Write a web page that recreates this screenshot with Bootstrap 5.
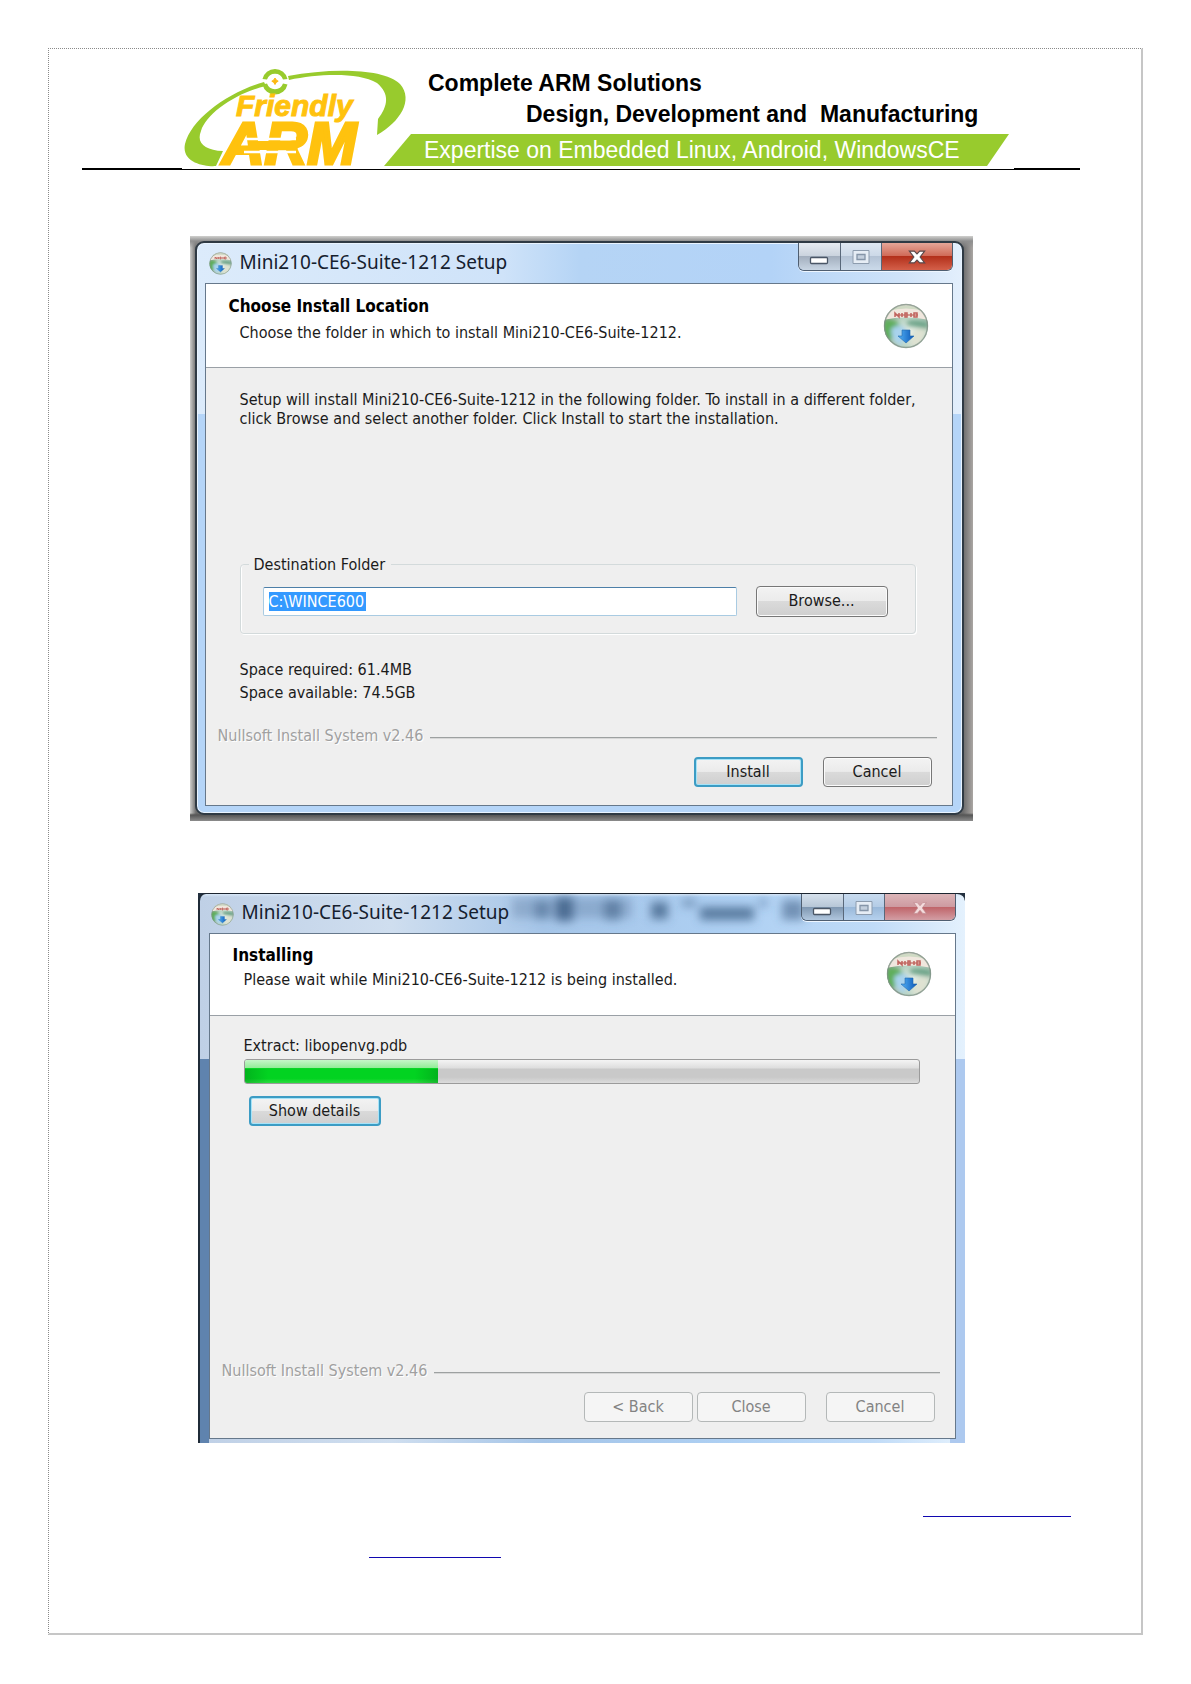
<!DOCTYPE html>
<html lang="en">
<head>
<meta charset="utf-8">
<meta name="viewport" content="width=device-width, initial-scale=1">
<title>Mini210-CE6-Suite installation</title>
<link href="https://cdn.jsdelivr.net/npm/bootstrap@5.3.0/dist/css/bootstrap.min.css" rel="stylesheet">
<style>
  body { background: #fff; color: #000; font-family: "Liberation Sans", Arial, sans-serif; }
  .sheet { margin: 48px; border: 1px dotted #8a8a8a; border-right: 2px solid #c6c6c6; border-bottom: 2px solid #c6c6c6; padding: 13px 61px 75px 33px; }

  /* Letterhead */
  .letterhead { border-bottom: 2px solid #000; padding-left: 100px; }
  .banner { background: #fff; width: 832px; max-width: 100%; padding: 5px 5px 2px 2px; margin-bottom: -1px; }
  .brand-logo { width: 224px; height: 100px; flex: none; overflow: visible; }
  .taglines { flex: 1 1 auto; margin-left: -24px; font-size: 23px; line-height: 31px; white-space: pre; }
  .tag-one { padding-left: 44px; padding-top: 1px; font-weight: bold; }
  .tag-two { padding-left: 142px; font-weight: bold; }
  .tag-band { margin-top: 4px; padding-left: 40px; line-height: 32px; color: #fff; background: #98cb2d; clip-path: polygon(27px 0, 100% 0, calc(100% - 22px) 100%, 0 100%); }

  /* Dialog windows */
  .shot-one { margin: 66px auto 0; width: 783px; max-width: 100%; padding: 5px 9px 6px 5px;
    background: linear-gradient(180deg, #d0d0ce 0, #8f8f8f 5px, transparent 12px), linear-gradient(0deg, #8c8c8c 0, #555 6px, transparent 8px), linear-gradient(90deg, #cfcfcd, #6b6b6b 6px, #888 50%, #6b6b6b 773px, #aaa6a3); }
  .shot-two { margin: 72px auto 0; width: 767px; max-width: 100%; background: #23303f; }
  .win { font-family: "DejaVu Sans Condensed", "DejaVu Sans", sans-serif; font-size: 16px; line-height: 19px; color: #1b1b1b; }
  .win-one { border: 2px solid #2f3a44; border-radius: 9px; padding: 0 9px 7px 8px;
    background: linear-gradient(180deg, transparent 171px, #b5d5f8 171px), linear-gradient(90deg, #dcebfb 0, #cfe3f9 40%, #b5d4f5 50%, #b3d3f7 75%, #cfe3f9 92%, #e3effc);
    box-shadow: inset 0 0 0 1px #e9f4ff; }
  .win-two { border-left: 2px solid #1f2b38; border-top: 1px solid #1c2530; border-radius: 8px 8px 0 0; padding: 0 9px 4px 9px;
    background: linear-gradient(180deg, #d8e7f7 0, rgba(216,231,247,0) 3px), linear-gradient(90deg, #5f83ae 9px, transparent 9px) 0 165px no-repeat, linear-gradient(90deg, transparent 750px, #adc9ef 750px) 0 165px no-repeat, linear-gradient(90deg, #bfd0e6 0, #cfdeef 25%, #a5c5e8 45%, #aed0f3 70%, #c0dbf7 88%, #e4f1fd); }
  .win-title { height: 40px; padding-left: 4px; gap: 8px; position: relative; }
  .win-two .win-title { height: 39px; padding-left: 2px; }
  .win-title h2 { font: 400 19px/38px "Noto Sans", "Open Sans", sans-serif; margin: 0; color: #15202e; }
  .win-two .win-title h2 { line-height: 37px; }
  .smudge { position: absolute; left: 293px; top: 0; width: 320px; height: 36px; }
  .disc-sm { width: 23px; height: 23px; margin-top: 9px; }
  .disc-lg { width: 46px; height: 46px; }
  .caption-btns { height: 28px; margin-left: auto; border: 1px solid #4f5e70; border-top: 0; border-radius: 0 0 6px 6px; overflow: hidden; box-shadow: 0 1px 0 #eef6ff; }
  .caption-btns button { border: 0; padding: 0; height: 27px; width: 41px; border-left: 1px solid #59687a; background: linear-gradient(#e6ebf1 0, #c9d2dd 50%, #a3afbe 50%, #c8d5e3); display: flex; align-items: center; justify-content: center; }
  .caption-btns button:first-child { border-left: 0; }
  .caption-btns .btn-shut { width: 71px; background: linear-gradient(#e6a698 0, #d06a57 48%, #b3301b 50%, #d4604a); }
  .caption-btns .btn-max { background: linear-gradient(#dfe8f2 0, #cbd8e7 50%, #b4c3d5 50%, #cbdaea); }
  .win-two .btn-min { background: linear-gradient(#d6e1ec 0, #b5c5d6 50%, #8098b2 50%, #b5cbe2); }
  .win-two .btn-max { background: linear-gradient(#c8dbef 0, #b3cbe5 50%, #9ab9da 50%, #b8d3ef); }
  .win-two .btn-shut { background: linear-gradient(#dcb5b8 0, #cd9aa0 48%, #c0666b 50%, #d4a3a9); }
  .win-two .caption-btns { height: 27px; }
  .client { border: 1px solid #66788b; background: #efefef; }
  .win-head { height: 84px; background: #fff; border-bottom: 1px solid #9aa0a6; padding: 12px 23px 0; }
  .win-two .win-head { height: 82px; padding-top: 11px; }
  .win-head h3 { font-size: 17px; line-height: 20px; font-weight: bold; margin: 0 0 7px; color: #000; }
  .win-two .win-head h3 { margin-bottom: 5px; }
  .win-head p { margin: 0; padding-left: 11px; }
  .win-head .disc-lg { margin: 7px 0 0; }
  .win-two .disc-lg { margin-top: 6px; }
  .body-one { padding: 22px 36px 0 34px; }
  .body-two { padding: 20px 36px 0 34px; }
  .dest { margin: 127px 0 0; border: 1px solid #d3dadb; border-radius: 4px; box-shadow: inset 1px 0 #fff, 1px 1px #fff; padding: 12px 27px 16px 22px; }
  .dest legend { float: none; width: auto; margin: 0 0 0 -14px; padding: 0 6px 0 5px; font-size: 16px; line-height: 19px; }
  .dest-input { flex: 1 1 auto; min-width: 0; height: 29px; border: 1px solid #a9cbe2; border-top-color: #4d7fa8; border-radius: 2px; padding: 0 5px; color: #fff; font: inherit;
    background: linear-gradient(#3399ff, #3399ff) 5px 4px / 97px 19px no-repeat #fff; }
  .dest-row { gap: 19px; }
  .wbtn { font: inherit; color: #1b1b1b; width: 109px; height: 30px; padding: 0 0 2px; border: 1px solid #777; border-radius: 4px; box-shadow: inset 0 0 0 1px #fbfbfb; background: linear-gradient(#f3f3f3 0, #ebebeb 48%, #dadada 50%, #cfcfcf); }
  .wbtn-wide { width: 132px; height: 31px; }
  .wbtn-focus { border: 2px solid #3c9cc4; box-shadow: inset 0 0 0 1px #a5e3f8; }
  .wbtn:disabled { color: #838383; background: #f5f5f5; border: 1px solid #b4b8b8; box-shadow: none; }
  .space-info { margin: 24px 0 22px; line-height: 23px; }
  .brandline { padding: 0 15px 0 12px; gap: 7px; color: #a0a0a0; text-shadow: 1px 1px #fff; }
  .brandline hr { flex: 1 1 auto; margin: 4px 0 0; border-top: 1px solid #9da1a1; box-shadow: 0 1px #d8d8d8; opacity: 1; }
  .win-actions { padding: 12px 20px 18px; gap: 20px; }
  .win-two .win-actions { padding-bottom: 16px; }
  .meter { height: 25px; margin: 4px -1px 12px 0; border: 1px solid #9b9b9b; border-radius: 3px; background: linear-gradient(#f4f4f4 0, #dedede 34%, #c9c9c9 40%, #c9c9c9 75%, #dcdcdc); }
  .meter .progress-bar { background: linear-gradient(90deg, rgba(0,120,20,.35), transparent 12%, transparent 88%, rgba(0,120,20,.35)) 0 9px no-repeat, linear-gradient(#c5f7c8 0, #8fec95 36%, #02d321 37%, #02d321 80%, #2bdc40); }
  .details { margin: 0 0 235px 5px; height: 30px; }

  /* Links under the figures */
  .ref-links { padding: 62px 9px 0 287px; }
  .ref-links a { height: 12px; border-bottom: 1px solid #1008b0; }
  .ref-a { width: 148px; }
  .ref-b { width: 132px; margin-top: 29px; }
</style>
</head>
<body>
<svg width="0" height="0" class="position-absolute" aria-hidden="true">
  <defs>
    <radialGradient id="g-disc" cx=".6" cy=".65" r=".6"><stop offset="0" stop-color="#e9efe6"/><stop offset=".6" stop-color="#b8d3c4"/><stop offset="1" stop-color="#8ba595"/></radialGradient>
    <linearGradient id="g-arrow" x1="0" x2="1"><stop offset="0" stop-color="#53b2f5"/><stop offset="1" stop-color="#0a56b8"/></linearGradient>
    <filter id="soft" x="-30%" y="-30%" width="160%" height="160%"><feGaussianBlur stdDeviation="2.2"/></filter>
    <filter id="haze" x="-60%" y="-60%" width="220%" height="220%"><feGaussianBlur stdDeviation="5"/></filter>
    <clipPath id="c-disc"><circle cx="23" cy="23" r="22"/></clipPath>
    <symbol id="disc" viewBox="0 0 46 46">
      <circle cx="23" cy="23" r="22" fill="url(#g-disc)"/>
      <g clip-path="url(#c-disc)">
        <g filter="url(#soft)">
          <path d="M0 18 Q12 14 18 24 Q12 32 6 38 L0 34Z" fill="#5fae5a"/>
          <path d="M8 26 Q18 18 24 28 L18 42 Q8 38 8 26Z" fill="#a9d3ee"/>
          <path d="M24 18 Q36 15 46 20 L45 26 Q34 24 24 22Z" fill="#6fa58a"/>
          <path d="M32 27 L44 26 L38 42 L26 44Z" fill="#dfe2d2"/>
        </g>
        <path d="M0 17 Q3 0 23 0 Q43 0 46 17 Q23 12 0 17Z" fill="#f0e7de"/>
        <path d="M5 8 Q23 -3 41 8 Q23 3 5 8Z" fill="#cfdac4"/>
        <path d="M12 14v-4l4 4v-4M19 10v4M22 14v-4h2v4zM28 10v4M31 14v-4h3v4z" stroke="#b4443e" stroke-opacity=".8" stroke-width="1.500" fill="none"/>
        <path d="M12 12H35" stroke="#c0625b" stroke-opacity=".6" stroke-width="2"/>
      </g>
      <path d="M19 27h8v6h4l-8 7-8-7h4z" fill="url(#g-arrow)" stroke="#2368ad" stroke-width=".6"/>
      <circle cx="23" cy="23" r="21.500" fill="none" stroke="#7d8f84" stroke-opacity=".75" stroke-width="1.400"/>
    </symbol>
    <symbol id="i-min" viewBox="0 0 20 20"><rect x="1.500" y="10.500" width="17" height="6" rx="1" fill="#fff" stroke="#4a5666" stroke-width="1.300"/></symbol>
    <symbol id="i-max" viewBox="0 0 20 20"><path d="M2 3.500h16v13H2z" fill="#e6edf5" stroke="#8d9cae"/><path d="M6 7.500h8v5H6z" fill="#c3cfdd" stroke="#8595a8" stroke-width="1.300"/></symbol>
    <symbol id="i-x" viewBox="0 0 20 20"><path d="M1.500 3.500h5.500L10 6.500l3-3h5.500L13.500 10l5 6.500h-5.500L10 13.500l-3 3H1.500L6.500 10z" fill="#fff" stroke="#5b4a4c" stroke-width="1.300"/></symbol>
    <symbol id="i-x-dim" viewBox="0 0 20 20"><path d="M3 4h4l3 3.500L13 4h4l-4.500 6 4.500 6h-4l-3-3.500L7 16H3l4.500-6z" fill="#f3dcdd" stroke="#c08a90" stroke-width=".8"/></symbol>
  </defs>
</svg>

<div class="sheet">
  <header class="letterhead">
    <div class="banner d-flex align-items-start position-relative">
      <svg class="brand-logo" viewBox="184 67 224 100" role="img" aria-label="Friendly ARM">
        <g fill="#98cb2d">
          <path d="M288 76 C330 68 384 68 400 84 C414 100 400 122 377 135 L378 119 C388 106 390 94 377 83 C358 72 318 74 289 80Z"/>
          <path d="M264 82 C228 92 191 119 185 144 C181 163 206 167 216 166 L223 151 C205 150 196 143 201 131 C206 114 235 93 266 86Z"/>
          <path d="M262.500 79 A12.800 12.800 0 0 1 287.500 79 L283 79.500 A8.500 8.500 0 0 0 267 79.500Z"/>
          <path d="M262.500 84.500 A12.800 12.800 0 0 0 287.500 84.500 L283 83.500 A8.500 8.500 0 0 1 267 83.500Z"/>
        </g>
        <path d="M275 78l1.200 2 2 1.200-2 1.200L275 84.500l-1.200-2.100-2-1.200 2-1.200z" fill="#fdb913" stroke="#fdb913"/>
        <text font-family="Liberation Sans, Arial, sans-serif" font-weight="bold" font-style="italic" fill="#ffc20e" stroke="#ffc20e"><tspan x="236" y="116" font-size="30" stroke-width="1">Friendly</tspan><tspan x="222" y="164" font-size="59" stroke-width="3">ARM</tspan></text>
        <path d="M246 139H296M244 152H296" stroke="#fff" stroke-width="2.500"/>
        <path d="M250 141H300L297 150H246Z" fill="#ffc20e"/>
      </svg>
      <div class="taglines"><div class="tag-one">Complete ARM Solutions</div><div class="tag-two">Design, Development and&nbsp; Manufacturing</div><div class="tag-band">Expertise on Embedded Linux, Android, WindowsCE</div></div>
    </div>
  </header>

  <main>
    <div class="shot-one">
      <section class="win win-one" aria-label="Choose install location">
        <div class="win-title d-flex align-items-start">
          <svg class="disc-sm" aria-hidden="true"><use href="#disc"/></svg>
          <h2>Mini210-CE6-Suite-1212 Setup</h2>
          <div class="caption-btns d-flex">
            <button type="button" class="btn-min" aria-label="Minimize"><svg width="20" height="20"><use href="#i-min"/></svg></button>
            <button type="button" class="btn-max" aria-label="Maximize"><svg width="20" height="20"><use href="#i-max"/></svg></button>
            <button type="button" class="btn-shut" aria-label="Close window"><svg width="18" height="18"><use href="#i-x"/></svg></button>
          </div>
        </div>
        <div class="client">
          <div class="win-head d-flex justify-content-between">
            <div>
              <h3>Choose Install Location</h3>
              <p>Choose the folder in which to install Mini210-CE6-Suite-1212.</p>
            </div>
            <svg class="disc-lg" aria-hidden="true"><use href="#disc"/></svg>
          </div>
          <div class="body-one">
            <p class="m-0 text-nowrap">Setup will install Mini210-CE6-Suite-1212 in the following folder. To install in a different folder,<br>click Browse and select another folder. Click Install to start the installation.</p>
            <fieldset class="dest">
              <legend>Destination Folder</legend>
              <div class="dest-row d-flex align-items-center">
                <input class="dest-input" type="text" value="C:\WINCE600" aria-label="Destination Folder">
                <button type="button" class="wbtn wbtn-wide">Browse...</button>
              </div>
            </fieldset>
            <div class="space-info">
              <div>Space required: 61.4MB</div>
              <div>Space available: 74.5GB</div>
            </div>
          </div>
          <div class="brandline d-flex align-items-center"><span>Nullsoft Install System v2.46</span><hr></div>
          <div class="win-actions d-flex justify-content-end">
            <button type="button" class="wbtn wbtn-focus">Install</button>
            <button type="button" class="wbtn">Cancel</button>
          </div>
        </div>
      </section>
    </div>

    <div class="shot-two">
      <section class="win win-two" aria-label="Installing">
        <div class="win-title d-flex align-items-start">
          <svg class="smudge" viewBox="0 0 320 36" aria-hidden="true">
            <g filter="url(#haze)" fill="#46658c">
              <rect x="10" y="4" width="120" height="20" opacity=".3"/>
              <rect x="33" y="7" width="14" height="18" opacity=".5"/>
              <rect x="54" y="3" width="17" height="24" opacity=".9"/>
              <rect x="102" y="6" width="17" height="20" opacity=".6"/>
              <rect x="149" y="8" width="17" height="17" opacity=".8"/>
              <rect x="180" y="5" width="14" height="8" opacity=".5"/>
              <rect x="198" y="13" width="54" height="13" opacity=".8"/>
              <rect x="256" y="5" width="10" height="8" opacity=".4"/>
              <rect x="280" y="6" width="22" height="20" opacity=".6"/>
            </g>
          </svg>
          <svg class="disc-sm" aria-hidden="true"><use href="#disc"/></svg>
          <h2>Mini210-CE6-Suite-1212 Setup</h2>
          <div class="caption-btns d-flex position-relative">
            <button type="button" class="btn-min" aria-label="Minimize"><svg width="20" height="20"><use href="#i-min"/></svg></button>
            <button type="button" class="btn-max" aria-label="Maximize"><svg width="20" height="20"><use href="#i-max"/></svg></button>
            <button type="button" class="btn-shut" aria-label="Close window"><svg width="18" height="18"><use href="#i-x-dim"/></svg></button>
          </div>
        </div>
        <div class="client">
          <div class="win-head d-flex justify-content-between">
            <div>
              <h3>Installing</h3>
              <p>Please wait while Mini210-CE6-Suite-1212 is being installed.</p>
            </div>
            <svg class="disc-lg" aria-hidden="true"><use href="#disc"/></svg>
          </div>
          <div class="body-two">
            <div id="extract">Extract: libopenvg.pdb</div>
            <div class="progress meter" role="progressbar" aria-labelledby="extract" aria-valuenow="29" aria-valuemin="0" aria-valuemax="100"><div class="progress-bar" style="width:28.700%"></div></div>
            <button type="button" class="wbtn wbtn-wide wbtn-focus details d-block">Show details</button>
          </div>
          <div class="brandline d-flex align-items-center"><span>Nullsoft Install System v2.46</span><hr></div>
          <div class="win-actions d-flex justify-content-end">
            <div class="d-flex gap-1">
              <button type="button" class="wbtn" disabled>&lt; Back</button>
              <button type="button" class="wbtn" disabled>Close</button>
            </div>
            <button type="button" class="wbtn" disabled>Cancel</button>
          </div>
        </div>
      </section>
    </div>

    <nav class="ref-links d-flex flex-column" aria-label="References">
      <a class="ref-a align-self-end" href="#extract" aria-label="Reference one"></a>
      <a class="ref-b" href="#extract" aria-label="Reference two"></a>
    </nav>
  </main>
</div>
<script src="https://cdn.jsdelivr.net/npm/bootstrap@5.3.0/dist/js/bootstrap.bundle.min.js"></script>
</body>
</html>
